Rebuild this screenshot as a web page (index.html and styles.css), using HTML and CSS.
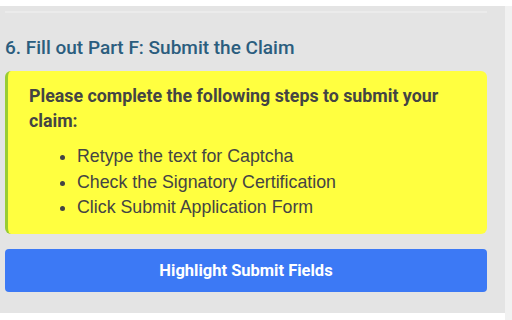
FILE: index.html
```html
<!DOCTYPE html>
<html>
<head>
<meta charset="utf-8">
<link rel="stylesheet" href="styles.css">
</head>
<body>
<div class="page">
  <div class="panel">
    <div class="rule"></div>
    <h2 class="title">6. Fill out Part F: Submit the Claim</h2>
    <div class="notice">
      <p class="lead">Please complete the following steps to submit your claim:</p>
      <ul class="steps">
        <li>Retype the text for Captcha</li>
        <li>Check the Signatory Certification</li>
        <li>Click Submit Application Form</li>
      </ul>
    </div>
    <button class="highlight">Highlight Submit Fields</button>
  </div>
  <div class="track"></div>
</div>
</body>
</html>
```
FILE: styles.css
```css
html, body {
  margin: 0;
  padding: 0;
  background: #ffffff;
}
.page {
  display: flex;
  width: 512px;
  height: 320px;
  padding-top: 6px;
  box-sizing: border-box;
}
.panel {
  width: 505px;
  height: 307px;
  box-sizing: border-box;
  background: #e4e4e4;
  padding: 5px 18px 0 5px;
  display: flex;
  flex-direction: column;
}
.track {
  flex: 1;
  background: #f1f1f1;
  margin-bottom: -6px;
}
.rule {
  height: 2px;
  background: #ebebeb;
}
.title {
  margin: 0;
  padding-top: 23px;
  font-family: Roboto, "Liberation Sans", sans-serif;
  font-weight: 500;
  font-size: 19px;
  line-height: 24px;
  color: #2b5d7e;
}
.notice {
  margin-top: 11px;
  background: #ffff40;
  border-left: 3px solid #99cc33;
  border-radius: 6px;
  padding: 12px 20px 13px 21px;
}
.lead {
  margin: 0;
  font-family: Roboto, "Liberation Sans", sans-serif;
  font-weight: 700;
  font-size: 17.8px;
  line-height: 25px;
  color: #444444;
}
.steps {
  margin: 11px 0 0 0;
  padding-left: 48px;
  font-family: "Liberation Sans", Arial, sans-serif;
  font-size: 17.8px;
  line-height: 25.5px;
  color: #444444;
}
.highlight {
  margin-top: 15px;
  height: 43px;
  border: none;
  border-radius: 4px;
  background: #3c79f5;
  color: #ffffff;
  font-family: Roboto, "Liberation Sans", sans-serif;
  font-weight: 700;
  font-size: 16.5px;
}
```
